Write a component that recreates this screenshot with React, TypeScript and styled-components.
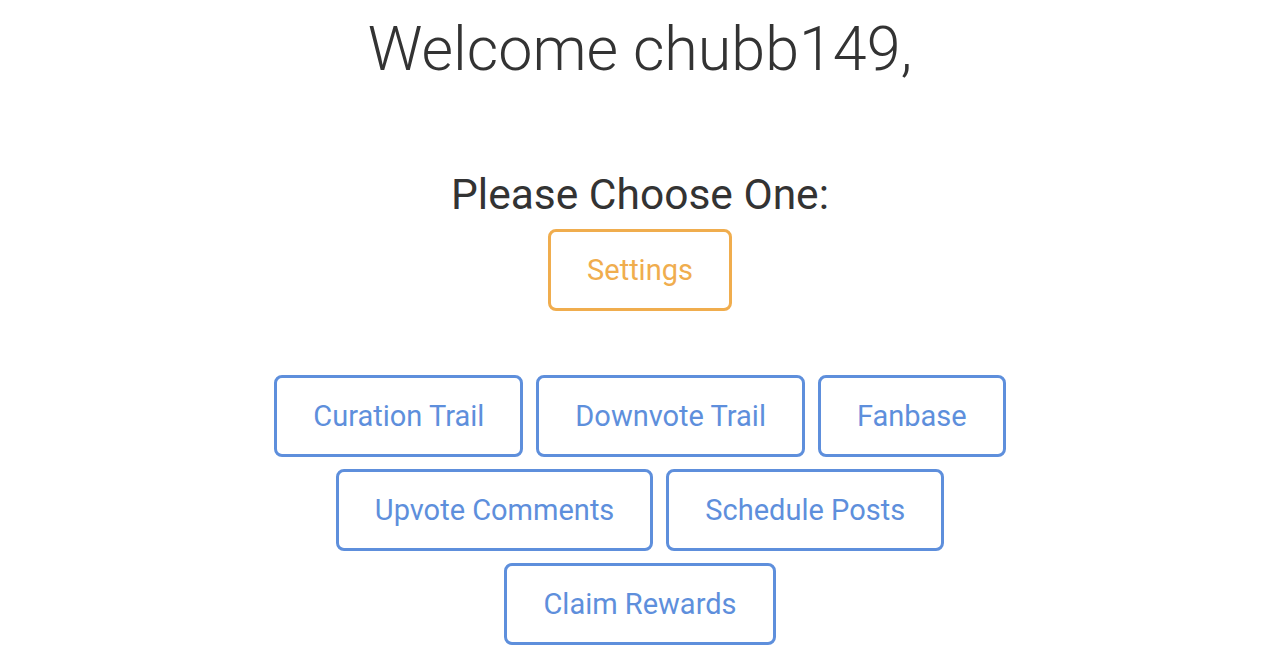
import styled, { createGlobalStyle } from 'styled-components';

const GlobalStyle = createGlobalStyle`
    body {
        margin: 0;
        background: #ffffff;
        font-family: Roboto, "Liberation Sans", sans-serif;
        color: #333333;
    }
`;

const Page = styled.div`
    display: flex;
    flex-direction: column;
    align-items: center;
    width: 100%;
`;

const Welcome = styled.h1`
    margin: 19px 0 0;
    font-size: 61px;
    font-weight: 300;
    line-height: 1;
    color: #333333;
`;

const Prompt = styled.h2`
    margin: 94px 0 0;
    font-size: 42.5px;
    font-weight: 400;
    line-height: 1;
    color: #333333;
`;

const OptionButton = styled.button<{ $tone: 'warning' | 'primary' }>`
    box-sizing: border-box;
    height: 82px;
    padding: 0 36px;
    background: #ffffff;
    border: 3px solid ${(p) => (p.$tone === 'warning' ? '#f0ad4e' : '#5e8fdc')};
    border-radius: 8px;
    color: ${(p) => (p.$tone === 'warning' ? '#f0ad4e' : '#5e8fdc')};
    font-family: Roboto, "Liberation Sans", sans-serif;
    font-size: 29px;
    font-weight: 400;
    cursor: pointer;
`;

const SettingsWrap = styled.div`
    margin-top: 12px;
`;

const OptionGrid = styled.div`
    margin-top: 64px;
    display: flex;
    flex-wrap: wrap;
    justify-content: center;
    gap: 12px 13px;
    max-width: 800px;
`;

const options = [
    'Curation Trail',
    'Downvote Trail',
    'Fanbase',
    'Upvote Comments',
    'Schedule Posts',
    'Claim Rewards',
];

function App() {
    const username = 'chubb149';
    return (
        <>
            <GlobalStyle />
            <Page>
                <Welcome>Welcome {username},</Welcome>
                <Prompt>Please Choose One:</Prompt>
                <SettingsWrap>
                    <OptionButton $tone="warning">Settings</OptionButton>
                </SettingsWrap>
                <OptionGrid>
                    {options.map((o) => (
                        <OptionButton key={o} $tone="primary">{o}</OptionButton>
                    ))}
                </OptionGrid>
            </Page>
        </>
    );
}

export default App;
